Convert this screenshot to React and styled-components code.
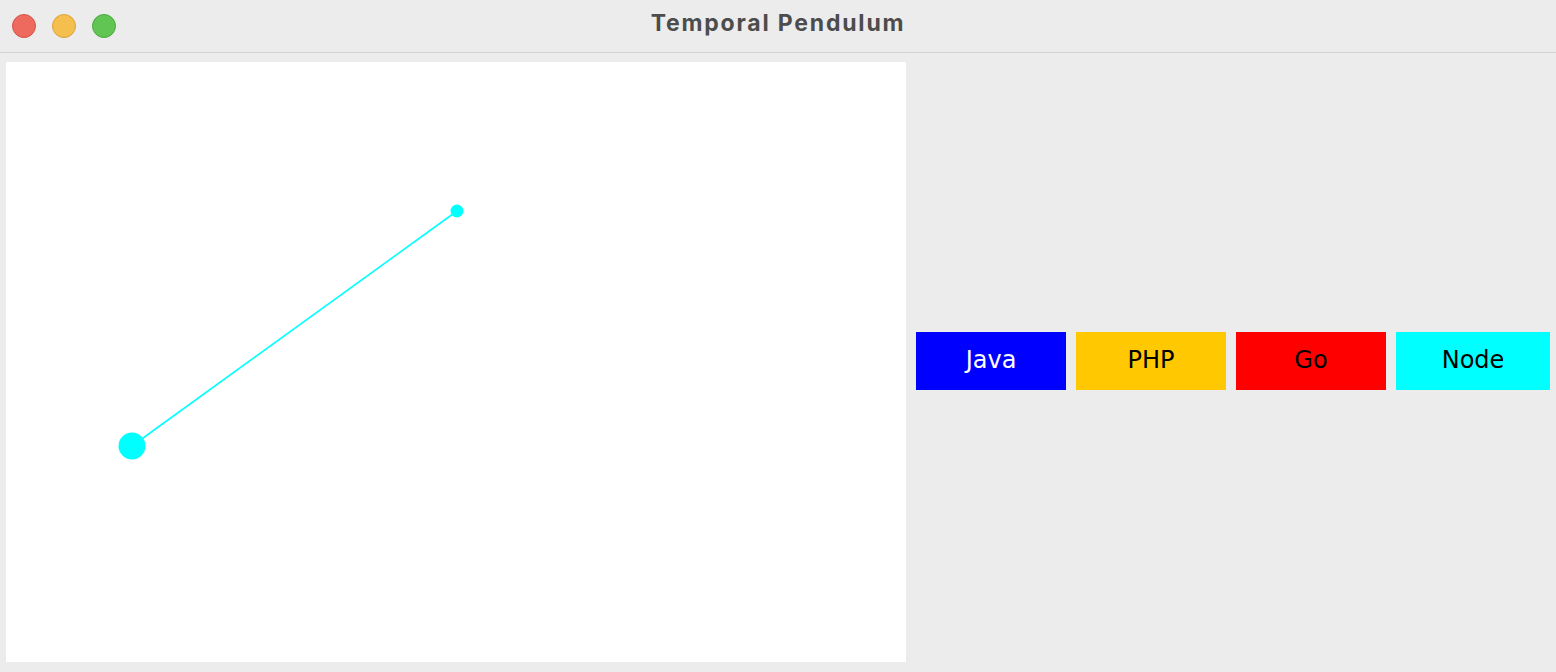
import React from "react";
import styled, { createGlobalStyle } from "styled-components";

const Global = createGlobalStyle`
  html, body { margin: 0; padding: 0; background: #ececec; }
  body { width: 1556px; height: 672px; overflow: hidden; }
`;

const Window = styled.div`
  width: 1556px;
  height: 672px;
  background: #ececec;
  display: flex;
  flex-direction: column;
  border-radius: 10px 10px 0 0;
  overflow: hidden;
`;

const TitleBar = styled.div`
  height: 52px;
  border-bottom: 1px solid #d2d2d2;
  display: flex;
  align-items: center;
  position: relative;
  flex-shrink: 0;
`;

const Lights = styled.div`
  display: flex;
  gap: 16px;
  padding-left: 12px;
`;

const Light = styled.span`
  width: 24px;
  height: 24px;
  border-radius: 50%;
  box-sizing: border-box;
  background: ${(p) => p.$c};
  border: 1px solid ${(p) => p.$b};
`;

const Title = styled.div`
  position: absolute;
  left: 0;
  right: 0;
  top: 0;
  bottom: 0;
  display: flex;
  align-items: center;
  justify-content: center;
  font-family: Inter, "Liberation Sans", sans-serif;
  font-weight: 700;
  font-size: 23px;
  letter-spacing: 1.8px;
  color: #4c4c4c;
  padding-bottom: 7px;
  box-sizing: border-box;
  pointer-events: none;
`;

const Body = styled.div`
  display: flex;
  padding: 9px 0 0 6px;
`;

const Canvas = styled.div`
  width: 900px;
  height: 600px;
  background: #ffffff;
  flex-shrink: 0;
`;

const Controls = styled.div`
  flex: 1;
  display: flex;
  align-items: center;
  gap: 10px;
  padding-left: 10px;
  padding-bottom: 2px;
`;

const LangButton = styled.div`
  width: ${(p) => p.$w}px;
  height: 58px;
  background: ${(p) => p.$bg};
  color: ${(p) => p.$fg};
  display: flex;
  align-items: center;
  justify-content: center;
  font-family: "DejaVu Sans", "Liberation Sans", sans-serif;
  font-size: 24px;
  padding-bottom: 3px;
  box-sizing: border-box;
`;

const buttons = [
  { label: "Java", bg: "#0000ff", fg: "#ffffff", w: 150 },
  { label: "PHP", bg: "#ffc800", fg: "#000000", w: 150 },
  { label: "Go", bg: "#ff0000", fg: "#000000", w: 150 },
  { label: "Node", bg: "#00ffff", fg: "#000000", w: 154 },
];

export default function App() {
  return (
    <>
      <Global />
      <Window>
        <TitleBar>
          <Lights>
            <Light $c="#ee6a5f" $b="#d55448" />
            <Light $c="#f5bf4f" $b="#d9a33a" />
            <Light $c="#61c554" $b="#4ca73f" />
          </Lights>
          <Title>Temporal Pendulum</Title>
        </TitleBar>
        <Body>
          <Canvas>
            <svg width="900" height="600" viewBox="0 0 900 600">
              <line x1="451" y1="149" x2="126" y2="384" stroke="#00ffff" strokeWidth="1.6" />
              <circle cx="451" cy="149" r="6.5" fill="#00ffff" />
              <circle cx="126" cy="384" r="13.5" fill="#00ffff" />
            </svg>
          </Canvas>
          <Controls>
            {buttons.map((b) => (
              <LangButton key={b.label} $bg={b.bg} $fg={b.fg} $w={b.w}>
                {b.label}
              </LangButton>
            ))}
          </Controls>
        </Body>
      </Window>
    </>
  );
}
